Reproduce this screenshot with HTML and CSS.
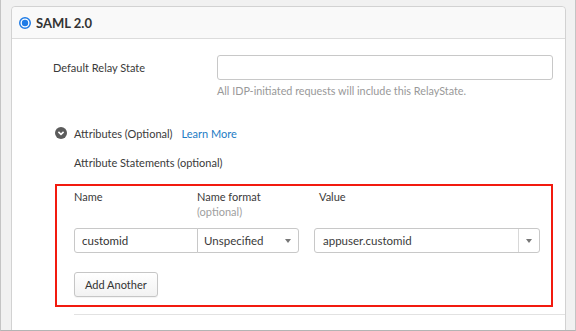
FILE: index.html
```html
<!DOCTYPE html>
<html lang="en">
<head>
    <meta charset="UTF-8">
    <title>SAML 2.0</title>
    <link rel="stylesheet" href="styles.css">
</head>
<body>
    <div class="frame">
        <div class="card">
            <div class="card-head">
                <svg class="radio" width="12" height="12" viewBox="0 0 12 12">
                    <circle cx="6" cy="6" r="5.25" fill="#fff" stroke="#1e7be6" stroke-width="1.5"/>
                    <circle cx="6" cy="6" r="3.2" fill="#1e7be6"/>
                </svg>
                <span class="card-title">SAML 2.0</span>
            </div>
            <div class="card-body">
                <div class="field-row">
                    <label class="field-label" for="relay">Default Relay State</label>
                    <div class="field-control">
                        <input type="text" id="relay" class="text-input wide">
                        <p class="help">All IDP-initiated requests will include this RelayState.</p>
                    </div>
                </div>

                <div class="toggle-row">
                    <svg class="toggle-icon" width="12" height="12" viewBox="0 0 12 12">
                        <circle cx="6" cy="6" r="6" fill="#5b5b5b"/>
                        <path d="M3.4 4.9 L6 7.4 L8.6 4.9" fill="none" stroke="#fff" stroke-width="1.6"/>
                    </svg>
                    <span>Attributes (Optional)</span>
                    <a class="link">Learn More</a>
                </div>

                <div class="sub-title">Attribute Statements (optional)</div>

                <div class="statements">
                    <div class="stmt-head">
                        <div class="col-name">Name</div>
                        <div class="col-format">Name format<span class="muted">(optional)</span></div>
                        <div class="col-value">Value</div>
                    </div>
                    <div class="stmt-row">
                        <input type="text" class="text-input name-input" value="customid">
                        <div class="select format-select">
                            <span>Unspecified</span>
                            <span class="caret"></span>
                        </div>
                        <div class="select value-select">
                            <span class="value-text">appuser.customid</span>
                            <span class="caret-box"><span class="caret"></span></span>
                        </div>
                    </div>
                    <button class="btn">Add Another</button>
                </div>

                <div class="divider"></div>
            </div>
        </div>
    </div>
</body>
</html>
```

FILE: styles.css
```css
html, body {
    margin: 0;
    padding: 0;
}

body {
    font-family: Lato, "Open Sans", Arial, sans-serif;
    font-size: 11px;
    color: #3a3a3a;
    background: #f1f1f1;
}

.frame {
    height: 331px;
    box-sizing: border-box;
    border-left: 1px solid #c4c4c4;
    border-right: 1px solid #c4c4c4;
    border-bottom: 1px solid #b4b4b4;
    padding: 6px 9px 0 10px;
    overflow: hidden;
}

.card {
    background: #fff;
    border: 1px solid #d2d2d2;
    border-radius: 4px 4px 0 0;
    height: 340px;
}

.card-head {
    height: 31px;
    display: flex;
    align-items: center;
    padding-left: 7px;
    background: #f9f9f9;
    border-bottom: 1px solid #dcdcdc;
    border-radius: 4px 4px 0 0;
}

.radio {
    margin-right: 5px;
}

.card-title {
    font-weight: bold;
    font-size: 13px;
    color: #333;
}

.card-body {
    padding: 16px 0 0 41px;
}

.field-row {
    display: flex;
}

.field-label {
    width: 164px;
    line-height: 25px;
}

.text-input {
    box-sizing: border-box;
    height: 25px;
    border: 1px solid #c8c8c8;
    border-radius: 3px;
    font-family: inherit;
    font-size: 11.5px;
    color: #333;
    padding: 0 7px;
    outline: none;
}

.wide {
    width: 336px;
    display: block;
}

.help {
    margin: 4px 0 0;
    font-size: 10.8px;
    line-height: 14px;
    color: #999;
}

.toggle-row {
    display: flex;
    align-items: center;
    margin-top: 28px;
    height: 14px;
    margin-left: 2px;
}

.toggle-icon {
    margin-right: 7px;
}

.link {
    color: #1c7bc4;
    margin-left: 9px;
}

.sub-title {
    margin: 16px 0 0 21px;
    line-height: 14px;
}

.statements {
    margin: 14px 0 0 2px;
    width: 498px;
    box-sizing: border-box;
    border: 2px solid #f21a0f;
    padding: 4px 0 8px 17px;
}

.stmt-head {
    display: flex;
    line-height: 14px;
    height: 38px;
}

.col-name {
    width: 123px;
}

.col-format {
    width: 122px;
}

.muted {
    display: block;
    color: #a0a0a0;
    margin-top: 1px;
}

.stmt-row {
    display: flex;
    align-items: center;
}

.name-input {
    width: 124px;
    border-radius: 3px 0 0 3px;
}

.select {
    box-sizing: border-box;
    height: 25px;
    border: 1px solid #c8c8c8;
    border-radius: 3px;
    display: flex;
    align-items: center;
    background: #fff;
    font-size: 11.5px;
}

.format-select {
    width: 102px;
    margin-left: -1px;
    border-radius: 0 3px 3px 0;
    padding: 0 7px 0 6px;
    justify-content: space-between;
}

.value-select {
    width: 226px;
    margin-left: 15px;
}

.value-text {
    flex: 1;
    padding-left: 8px;
}

.caret-box {
    width: 20px;
    height: 100%;
    border-left: 1px solid #d8d8d8;
    display: flex;
    align-items: center;
    justify-content: center;
}

.caret {
    width: 0;
    height: 0;
    border-left: 3px solid transparent;
    border-right: 3px solid transparent;
    border-top: 4px solid #777;
}

.btn {
    margin-top: 19px;
    height: 25px;
    padding: 0 10px;
    font-family: inherit;
    font-size: 11px;
    color: #333;
    border: 1px solid #c6c6c6;
    border-radius: 3px;
    background: linear-gradient(#ffffff, #f2f2f2);
    box-shadow: 0 1px 1px rgba(0, 0, 0, 0.05);
}

.divider {
    margin: 7px 0 0 21px;
    border-top: 1px solid #e2e2e2;
}
```
